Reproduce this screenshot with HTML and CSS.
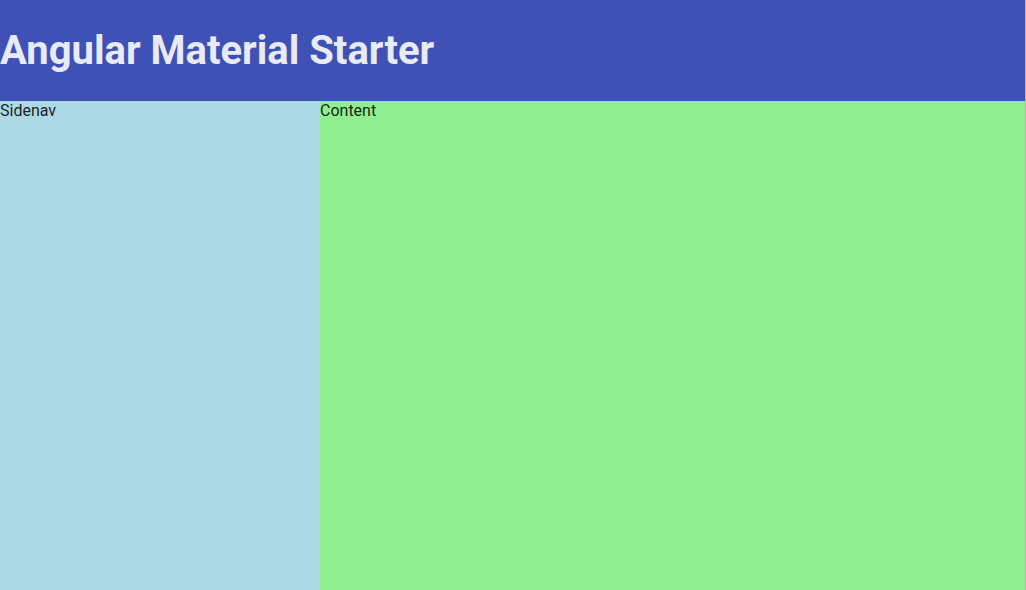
FILE: index.html
```html
<!DOCTYPE html>
<html lang="en">
<head>
    <meta charset="UTF-8">
    <meta name="viewport" content="width=device-width, initial-scale=1.0">
    <title>Angular Material Starter</title>
    <link rel="stylesheet" href="styles.css">
</head>
<body>
    <div class="page">
        <div class="app">
            <!-- Barra de topo -->
            <header class="toolbar">
                <h1>Angular Material Starter</h1>
            </header>

            <!-- Sidenav + conteúdo -->
            <div class="container">
                <nav class="sidenav">Sidenav</nav>
                <main class="content">Content</main>
            </div>
        </div>
        <div class="edge"></div>
    </div>
</body>
</html>
```

FILE: styles.css
```css
/* Layout geral */
html, body {
    margin: 0;
    padding: 0;
    height: 100%;
    overflow: hidden;
}

body {
    font-family: Roboto, "Helvetica Neue", sans-serif;
    font-size: 16px;
    color: rgba(0, 0, 0, 0.87);
}

.page {
    display: flex;
    height: 100%;
}

.app {
    flex: 1;
    display: flex;
    flex-direction: column;
}

/* Barra de topo */
.toolbar {
    background-color: #3f51b5;
    color: #e8eaf6;
    height: 101px;
    display: flex;
    align-items: center;
}

.toolbar h1 {
    margin: 0;
    font-size: 40px;
    font-weight: 700;
    letter-spacing: 0;
}

/* Sidenav e conteúdo */
.container {
    flex: 1;
    display: flex;
}

.sidenav {
    width: 320px;
    background-color: lightblue;
}

.content {
    flex: 1;
    background-color: lightgreen;
}

/* Faixa de 1px na borda direita */
.edge {
    width: 1px;
    background-color: #b8b8b8;
}
```
